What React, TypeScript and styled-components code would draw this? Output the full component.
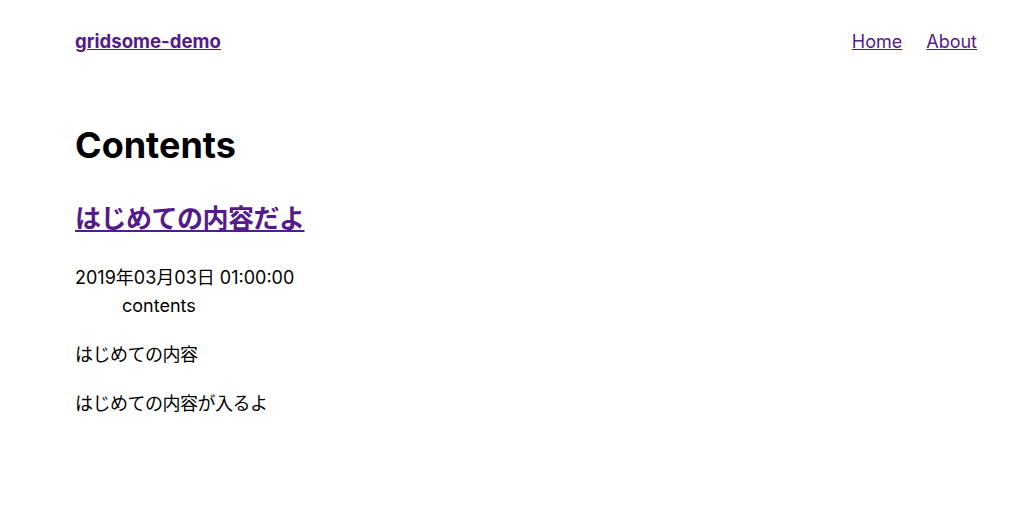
import styled, { createGlobalStyle } from 'styled-components';

const GlobalStyle = createGlobalStyle`
  body {
    margin: 0;
    padding: 0;
    background: #fff;
    color: #000;
    font-family: Inter, "Noto Sans CJK JP", sans-serif;
    font-size: 18px;
    line-height: 1.6;
  }
  a {
    color: #551a8b;
  }
`;

const Layout = styled.div`
  padding: 0 47px 0 75px;
`;

const Header = styled.header`
  display: flex;
  justify-content: space-between;
  align-items: center;
  height: 84px;
`;

const Brand = styled.strong`
  font-family: Inter, sans-serif;
  font-size: 18.6px;
  font-weight: 700;
`;

const Nav = styled.nav`
  display: flex;
  gap: 24px;
`;

const Title = styled.h1`
  font-size: 36px;
  font-weight: 700;
  line-height: 1.2;
  margin: 40px 0 0;
`;

const PostTitle = styled.h2`
  font-size: 26px;
  font-weight: 700;
  letter-spacing: -0.5px;
  line-height: 1.4;
  margin: 34px 0 0;
`;

const PostDate = styled.div`
  margin-top: 26px;
`;

const TagList = styled.ul`
  list-style: none;
  margin: 0;
  padding: 0 0 0 47px;
`;

const Paragraph = styled.p`
  margin: 20px 0 0;
  letter-spacing: -0.5px;
`;

export default function App() {
  return (
    <>
      <GlobalStyle />
      <Layout>
        <Header>
          <Brand>
            <a href="#">gridsome-demo</a>
          </Brand>
          <Nav>
            <a href="#">Home</a>
            <a href="#">About</a>
          </Nav>
        </Header>

        <Title>Contents</Title>

        <PostTitle>
          <a href="#">はじめての内容だよ</a>
        </PostTitle>
        <PostDate>2019年03月03日 01:00:00</PostDate>
        <TagList>
          <li>contents</li>
        </TagList>
        <Paragraph>はじめての内容</Paragraph>
        <Paragraph>はじめての内容が入るよ</Paragraph>
      </Layout>
    </>
  );
}
